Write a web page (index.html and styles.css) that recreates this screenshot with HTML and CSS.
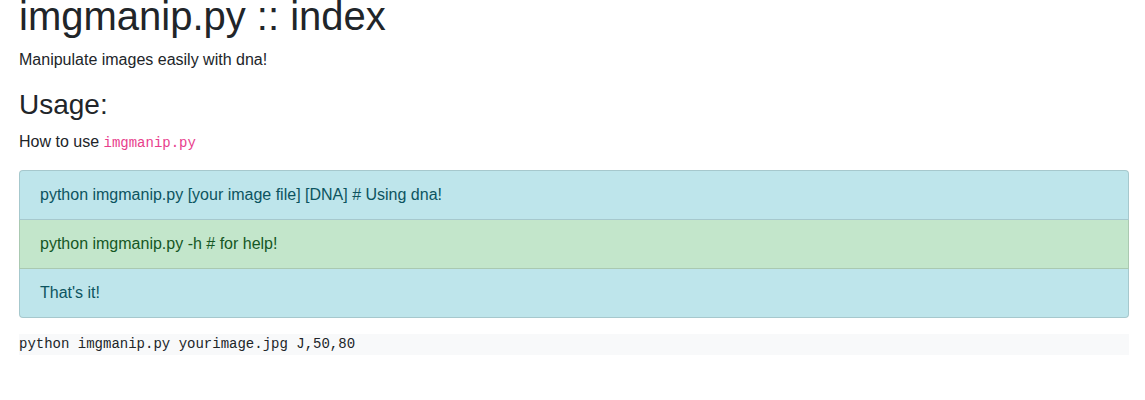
FILE: index.html
```html
<!DOCTYPE html>
<html lang="en">
<head>
<meta charset="utf-8">
<title>imgmanip.py :: index</title>
<link rel="stylesheet" href="styles.css">
</head>
<body>
<div class="container">
  <h1 class="title">imgmanip.py :: index</h1>
  <p class="text">Manipulate images easily with dna!</p>
  <h3 class="subtitle">Usage:</h3>
  <p class="text">How to use <code class="inline-code">imgmanip.py</code></p>
  <ul class="list-group">
    <li class="list-item item-info">python imgmanip.py [your image file] [DNA] # Using dna!</li>
    <li class="list-item item-success">python imgmanip.py -h # for help!</li>
    <li class="list-item item-info">That's it!</li>
  </ul>
  <pre class="example">python imgmanip.py yourimage.jpg J,50,80</pre>
</div>
</body>
</html>
```
FILE: styles.css
```css
html, body {
  margin: 0;
  padding: 0;
  background: #fff;
}
body {
  font-family: "Liberation Sans", Arial, sans-serif;
  font-size: 16px;
  line-height: 1.5;
  color: #212529;
}
.container {
  margin-top: -7.6px;
  padding: 0 16px 0 19px;
}
.title {
  font-size: 40px;
  font-weight: 500;
  line-height: 1.2;
  margin: 0 0 8px;
}
.subtitle {
  font-size: 28px;
  font-weight: 500;
  line-height: 1.2;
  margin: 0 0 8px;
}
.text {
  margin: 0 0 16px;
}
.inline-code {
  font-family: "Liberation Mono", "Courier New", monospace;
  font-size: 14px;
  color: #e83e8c;
}
.list-group {
  list-style: none;
  margin: 0 0 16px;
  padding: 0;
  display: flex;
  flex-direction: column;
}
.list-item {
  padding: 12px 20px;
  border: 1px solid rgba(0, 0, 0, 0.125);
  border-top-width: 0;
}
.list-item:first-child {
  border-top-width: 1px;
  border-radius: 4px 4px 0 0;
}
.list-item:last-child {
  border-radius: 0 0 4px 4px;
}
.item-info {
  background: #bee5eb;
  color: #0c5460;
}
.item-success {
  background: #c3e6cb;
  color: #155724;
}
.example {
  margin: 0 0 16px;
  font-family: "Liberation Mono", "Courier New", monospace;
  font-size: 14px;
  line-height: 1.5;
  background: #f8f9fa;
  color: #212529;
}
```
